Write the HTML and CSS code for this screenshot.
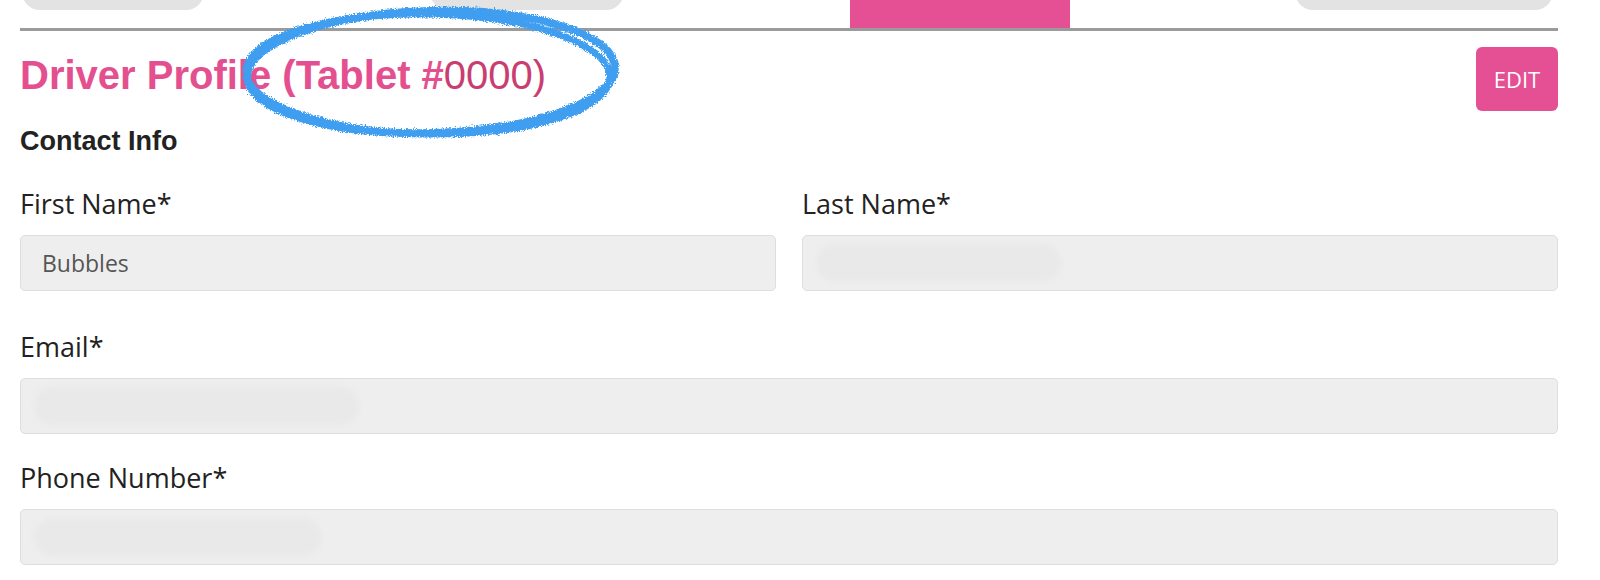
FILE: index.html
```html
<!DOCTYPE html>
<html lang="en">
<head>
<meta charset="utf-8">
<title>Driver Profile</title>
<link rel="stylesheet" href="styles.css">
</head>
<body>
<div class="page">
  <nav class="tabs">
    <span class="tab tab-1"></span>
    <span class="tab tab-2"></span>
    <span class="tab tab-active"></span>
    <span class="tab tab-4"></span>
  </nav>

  <header class="profile-head">
    <h1 class="title">Driver Profile (Tablet #<span class="num">0000)</span></h1>
    <button class="edit" type="button">EDIT</button>
  </header>

  <h2 class="section">Contact Info</h2>

  <div class="row-two">
    <div class="field">
      <label class="label">First Name*</label>
      <div class="input"><span class="value">Bubbles</span></div>
    </div>
    <div class="field">
      <label class="label">Last Name*</label>
      <div class="input"><span class="redact redact-last"></span></div>
    </div>
  </div>

  <div class="field field-email">
    <label class="label">Email*</label>
    <div class="input"><span class="redact redact-email"></span></div>
  </div>

  <div class="field field-phone">
    <label class="label">Phone Number*</label>
    <div class="input"><span class="redact redact-phone"></span></div>
  </div>

  <svg class="annotation" width="1600" height="580" viewBox="0 0 1600 580" aria-hidden="true">
    <defs>
      <filter id="rough" x="-10%" y="-10%" width="120%" height="120%">
        <feTurbulence type="fractalNoise" baseFrequency="0.9" numOctaves="2" seed="3" result="noise"/>
        <feDisplacementMap in="SourceGraphic" in2="noise" scale="6" xChannelSelector="R" yChannelSelector="G"/>
      </filter>
    </defs>
    <g filter="url(#rough)" fill="none" stroke="#3f9ef0" stroke-linecap="round">
      <ellipse cx="431" cy="72" rx="184" ry="61" stroke-width="8" transform="rotate(-1.5 431 72)"/>
      <ellipse cx="428" cy="74" rx="182" ry="60" stroke-width="7" transform="rotate(1 428 74)"/>
    </g>
  </svg>
</div>
</body>
</html>
```

FILE: styles.css
```css
html, body {
  margin: 0;
  padding: 0;
  background: #ffffff;
}

.page {
  position: relative;
  width: 1538px;
  padding-left: 20px;
  font-family: "Open Sans", "Liberation Sans", sans-serif;
  color: #222222;
}

/* top tab strip (cut off at the top) */
.tabs {
  display: flex;
  align-items: flex-end;
  height: 28px;
  border-bottom: 3px solid #9b9b9b;
  overflow: hidden;
}

.tab {
  display: block;
  flex: none;
  height: 40px;
  margin-bottom: 18px;
  background: #e3e3e3;
  border-radius: 18px;
}

.tab-1 { width: 182px; margin-left: 2px; }
.tab-2 { width: 194px; margin-left: 226px; }
.tab-active {
  width: 220px;
  height: 28px;
  margin-left: 226px;
  margin-bottom: 0;
  background: #e54f93;
  border-radius: 0;
}
.tab-4 { width: 258px; margin-left: 225px; }

/* heading row */
.profile-head {
  display: flex;
  justify-content: space-between;
  align-items: flex-start;
  margin-top: 16px;
}

.title {
  margin: 4px 0 0;
  font-family: "Liberation Sans", Arial, sans-serif;
  font-weight: 700;
  font-size: 40px;
  line-height: 48px;
  letter-spacing: 0;
  color: #e4508f;
}

.title .num {
  font-weight: 400;
  color: #c93d71;
}

.edit {
  width: 82px;
  height: 64px;
  padding: 0;
  border: none;
  border-radius: 6px;
  background: #e54f93;
  color: #ffffff;
  font-family: "Open Sans", sans-serif;
  font-size: 22px;
  cursor: pointer;
}

.section {
  margin: 15px 0 0;
  font-family: "Liberation Sans", Arial, sans-serif;
  font-weight: 700;
  font-size: 27px;
  line-height: 30px;
  letter-spacing: 0;
  color: #222222;
}

/* form */
.row-two {
  display: grid;
  grid-template-columns: 1fr 1fr;
  column-gap: 26px;
  margin-top: 30px;
}

.field {
  display: flex;
  flex-direction: column;
}

.field-email { margin-top: 38px; }
.field-phone { margin-top: 26px; }

.label {
  font-size: 27px;
  line-height: 36px;
  color: #222222;
}

.input {
  display: flex;
  align-items: center;
  box-sizing: border-box;
  height: 56px;
  margin-top: 13px;
  padding: 0 13px;
  background: #eeeeee;
  border: 1px solid #dedede;
  border-radius: 5px;
}

.value {
  padding-left: 8px;
  font-size: 23px;
  color: #555555;
}

.redact {
  display: block;
  height: 38px;
  border-radius: 19px;
  background: #e9e9e9;
  filter: blur(2px);
}

.redact-last { width: 245px; }
.redact-email { width: 325px; }
.redact-phone { width: 287px; }

/* hand-drawn annotation over the title */
.annotation {
  position: absolute;
  left: 0;
  top: 0;
  pointer-events: none;
}
```
